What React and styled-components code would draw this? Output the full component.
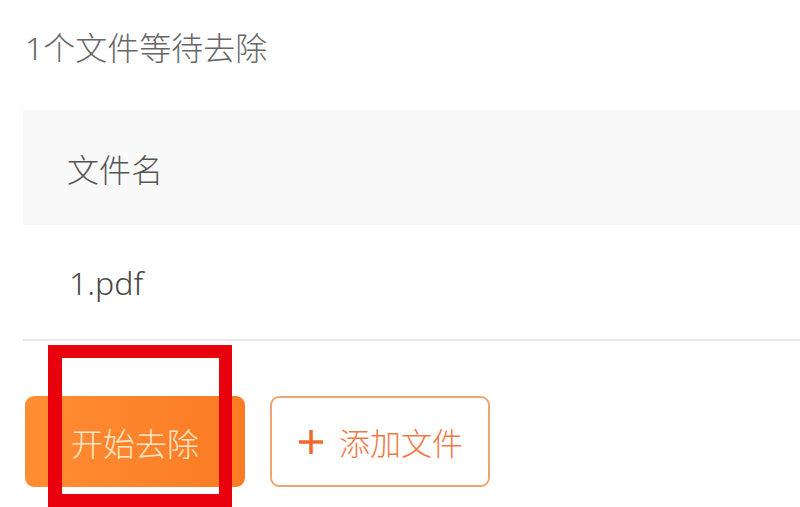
import React from 'react';
import styled, { createGlobalStyle } from 'styled-components';

const GlobalStyle = createGlobalStyle`
  html, body {
    margin: 0;
    padding: 0;
    background: #ffffff;
    overflow: hidden;
  }
  body {
    font-family: "Noto Sans", "Noto Sans CJK SC", sans-serif;
    font-weight: 300;
  }
`;

export default function App() {
  return (
    <>
      <GlobalStyle />
      <Page>
        <Title>1个文件等待去除</Title>
        <Table>
          <HeadRow>
            <HeadCell>文件名</HeadCell>
          </HeadRow>
          <BodyRow>
            <BodyCell>1.pdf</BodyCell>
          </BodyRow>
        </Table>
        <Actions>
          <PrimaryButton>开始去除</PrimaryButton>
          <OutlineButton>
            <PlusIcon width="28" height="28" viewBox="0 0 28 28">
              <path d="M14 2 V26 M2 14 H26" stroke="#f1692b" strokeWidth="3.5" fill="none" />
            </PlusIcon>
            添加文件
          </OutlineButton>
        </Actions>
        <Highlight />
      </Page>
    </>
  );
}

const Page = styled.div`
  position: relative;
  width: 800px;
  height: 507px;
  padding: 28px 0 0 25px;
  box-sizing: border-box;
`;

const Title = styled.div`
  font-size: 32px;
  line-height: 40px;
  color: #666666;
  margin-bottom: 42px;
`;

const Table = styled.div`
  margin-left: -2px;
  border-bottom: 2px solid #e9e9e9;
`;

const HeadRow = styled.div`
  display: flex;
  align-items: center;
  height: 115px;
  background: #f9f9f9;
`;

const BodyRow = styled.div`
  display: flex;
  align-items: center;
  height: 114px;
  background: #ffffff;
`;

const HeadCell = styled.div`
  padding-left: 44px;
  font-size: 32px;
  color: #555555;
`;

const BodyCell = styled.div`
  padding-left: 46px;
  font-size: 32px;
  color: #484848;
`;

const Actions = styled.div`
  display: flex;
  gap: 25px;
  margin-top: 55px;
`;

const PrimaryButton = styled.div`
  display: flex;
  align-items: center;
  justify-content: center;
  width: 220px;
  height: 91px;
  border-radius: 9px;
  background: linear-gradient(90deg, #ff8d33 0%, #fb7b24 100%);
  color: #fde6c8;
  font-size: 32px;
`;

const OutlineButton = styled.div`
  display: flex;
  align-items: center;
  justify-content: center;
  gap: 14px;
  width: 220px;
  height: 91px;
  box-sizing: border-box;
  border: 2px solid #eea575;
  border-radius: 9px;
  background: #ffffff;
  color: #ee7a48;
  font-size: 31px;
`;

const PlusIcon = styled.svg`
  flex-shrink: 0;
`;

const Highlight = styled.div`
  position: absolute;
  left: 48px;
  top: 345px;
  width: 184px;
  height: 162px;
  box-sizing: border-box;
  border: 13px solid #e8000d;
  border-left-width: 14px;
`;
